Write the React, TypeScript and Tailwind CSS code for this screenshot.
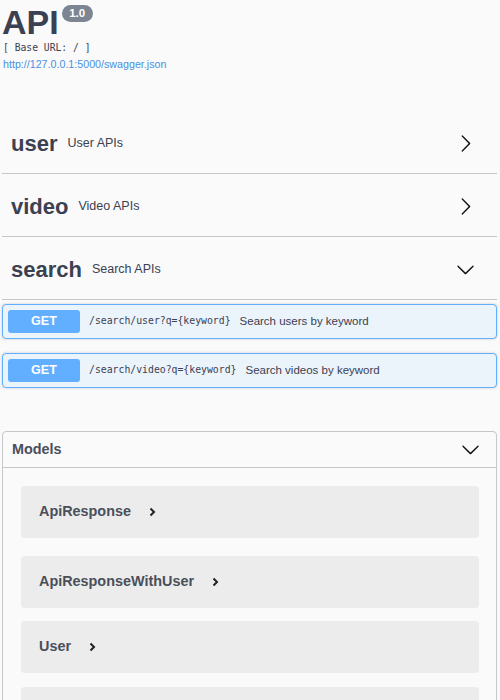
const tags = [
  { name: 'user', desc: 'User APIs', open: false },
  { name: 'video', desc: 'Video APIs', open: false },
  { name: 'search', desc: 'Search APIs', open: true },
];

const ops = [
  { path: '/search/user?q={keyword}', desc: 'Search users by keyword' },
  { path: '/search/video?q={keyword}', desc: 'Search videos by keyword' },
];

const models = [
  { name: 'ApiResponse', mt: 'mt-[18px]' },
  { name: 'ApiResponseWithUser', mt: 'mt-[18px]' },
  { name: 'User', mt: 'mt-[13px]' },
  { name: '', mt: 'mt-[14px]' },
];

function ArrowRight() {
  return (
    <svg width="19" height="19" viewBox="0 0 20 20" fill="#111">
      <path d="M13.25 10L6.109 2.58a.697.697 0 010-.979.68.68 0 01.969 0l7.83 7.908a.697.697 0 010 .979l-7.83 7.908a.68.68 0 01-.969 0 .697.697 0 010-.978L13.25 10z" />
    </svg>
  );
}

function ArrowDown() {
  return (
    <svg width="19" height="19" viewBox="0 0 20 20" fill="#111">
      <path d="M17.418 6.109c.272-.268.709-.268.979 0s.271.701 0 .969l-7.908 7.83c-.27.268-.707.268-.979 0l-7.908-7.83c-.27-.268-.27-.701 0-.969.271-.268.709-.268.979 0L10 13.25l7.418-7.141z" />
    </svg>
  );
}

function ModelToggle() {
  return (
    <svg width="7" height="10" viewBox="0 0 7 10" fill="none" stroke="#222" strokeWidth="2">
      <polyline points="1.5,1.5 5,5 1.5,8.5" />
    </svg>
  );
}

export default function App() {
  return (
    <div className="min-h-screen bg-[#fafafa] pl-[2px] pr-[3px] font-['Liberation_Sans',Arial,sans-serif] text-[#3b4151]">
      {/* info */}
      <div className="flex items-start">
        <h1 className="mt-[2px] text-[34px] font-bold leading-[40px]">API</h1>
        <span className="ml-[3px] mt-[5px] flex h-[17px] w-[31px] items-center justify-center rounded-full bg-[#7d8492] text-[11.5px] font-bold text-white">
          1.0
        </span>
      </div>
      <p className="pl-[1px] font-['DejaVu_Sans_Mono',monospace] text-[9.7px] leading-[12px]">[ Base URL: / ]</p>
      <a className="mt-[4px] block pl-[1px] text-[10.7px] leading-[12px] text-[#4990e2]">
        http://127.0.0.1:5000/swagger.json
      </a>

      {/* tags */}
      <div className="mt-[41px]">
        {tags.map((t) => (
          <div key={t.name} className="flex h-[63px] items-center border-b border-[#c6c7cb] pl-[9px] pr-[22px] pt-[3px]">
            <span className="text-[22px] font-bold leading-none">{t.name}</span>
            <span className="ml-[10px] text-[12.5px]">{t.desc}</span>
            <span className="ml-auto">{t.open ? <ArrowDown /> : <ArrowRight />}</span>
          </div>
        ))}
      </div>

      {/* operations */}
      <div className="mt-[4px]">
        {ops.map((o, i) => (
          <div
            key={o.path}
            className={`flex h-[35px] items-center rounded-[4px] border border-[#61affe] bg-[#ebf3fb] px-[5px] shadow-[0_0_3px_rgba(0,0,0,0.19)] ${i > 0 ? 'mt-[14px]' : ''}`}
          >
            <span className="flex h-[23px] w-[72px] items-center justify-center rounded-[3px] bg-[#61affe] text-[12.6px] font-bold text-white">
              GET
            </span>
            <span className="ml-[9px] font-['DejaVu_Sans_Mono',monospace] text-[9.8px]">{o.path}</span>
            <span className="ml-[9px] text-[11.5px]">{o.desc}</span>
          </div>
        ))}
      </div>

      {/* models */}
      <div className="mt-[43px] rounded-[4px] border border-[#c6c7cb]">
        <div className="flex h-[36px] items-center border-b border-[#c6c7cb] pl-[9px] pr-[16px]">
          <span className="text-[14.4px] font-bold text-[#4a4f5a]">Models</span>
          <span className="ml-auto">
            <ArrowDown />
          </span>
        </div>
        <div className="pb-[15px] pl-[18px] pr-[17px]">
          {models.map((m, i) => (
            <div key={i} className={`flex h-[52px] items-center rounded-[4px] bg-[#ececec] pl-[18px] ${m.mt}`}>
              {m.name && (
                <>
                  <span className="text-[14.4px] font-bold text-[#4a4f5a]">{m.name}</span>
                  <span className="ml-[18px] flex items-center">
                    <ModelToggle />
                  </span>
                </>
              )}
            </div>
          ))}
        </div>
      </div>
    </div>
  );
}
